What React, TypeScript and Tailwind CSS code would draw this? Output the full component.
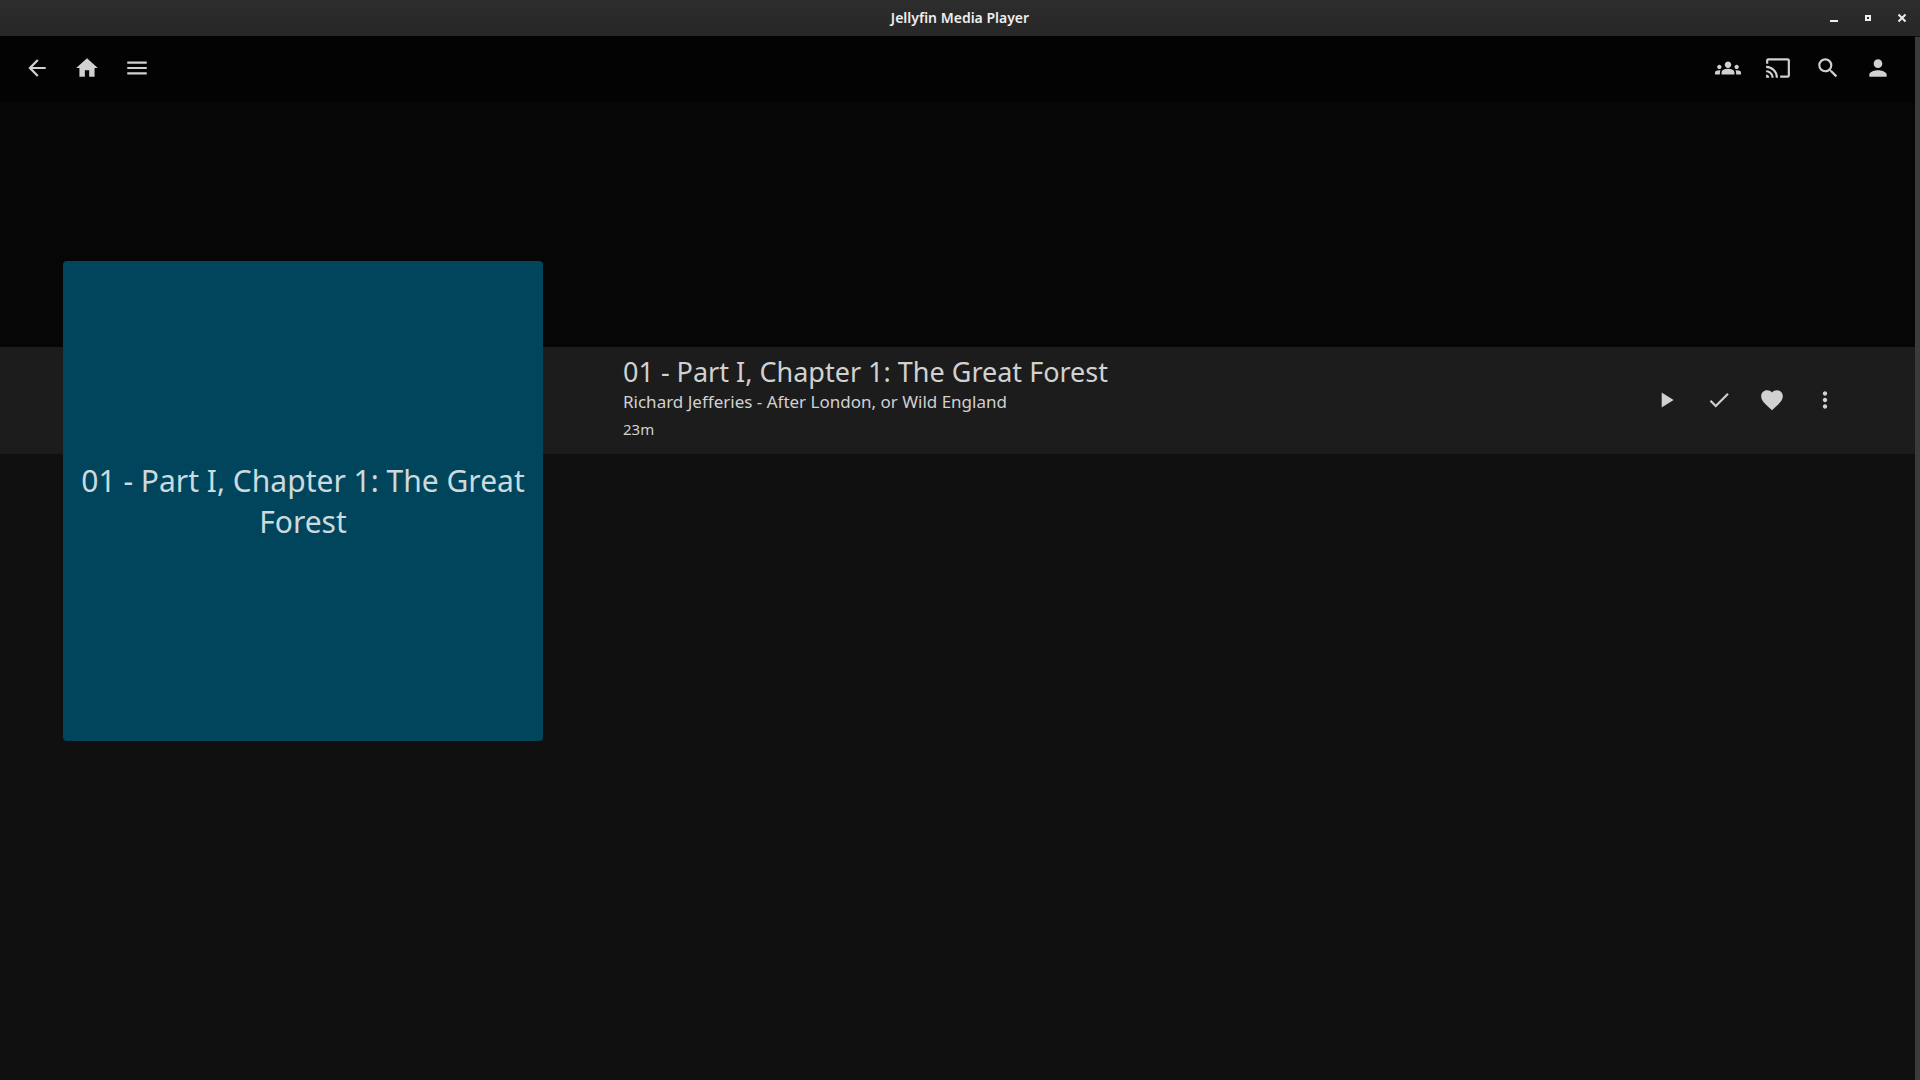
import type { ReactNode } from "react";
import type { IconType } from "react-icons";
import {
  MdArrowBack,
  MdCast,
  MdCheck,
  MdFavorite,
  MdGroups,
  MdHome,
  MdMenu,
  MdMoreVert,
  MdPerson,
  MdPlayArrow,
  MdSearch,
} from "react-icons/md";

type Action = { label: string; icon: IconType };

const navActions: Action[] = [
  { label: "Back", icon: MdArrowBack },
  { label: "Home", icon: MdHome },
  { label: "Menu", icon: MdMenu },
];

const userActions: Action[] = [
  { label: "SyncPlay", icon: MdGroups },
  { label: "Cast to device", icon: MdCast },
  { label: "Search", icon: MdSearch },
  { label: "User", icon: MdPerson },
];

const itemActions: Action[] = [
  { label: "Play", icon: MdPlayArrow },
  { label: "Mark played", icon: MdCheck },
  { label: "Favorite", icon: MdFavorite },
  { label: "More", icon: MdMoreVert },
];

function WindowButton({ label, children }: { label: string; children: ReactNode }) {
  return (
    <button type="button" aria-label={label} className="flex h-9 w-[34px] items-center justify-center">
      <svg width="10" height="10" viewBox="0 0 10 10" fill="none" stroke="#eeeeec" strokeWidth="2" aria-hidden="true">
        {children}
      </svg>
    </button>
  );
}

function TitleBar() {
  return (
    <div className="grid h-9 grid-cols-[1fr_auto_1fr] items-center bg-linear-to-b from-[#2d2d2d] to-[#272727]">
      <span />
      <h1 className="text-[14px] leading-5 font-semibold text-[#eeeeec]">Jellyfin Media Player</h1>
      <div className="flex justify-end pr-px">
        <WindowButton label="Minimize">
          <path d="M1 8h8" />
        </WindowButton>
        <WindowButton label="Maximize">
          <path d="M3 3h4v4H3z" />
        </WindowButton>
        <WindowButton label="Close">
          <path d="M1.5 1.5l7 7M8.5 1.5l-7 7" />
        </WindowButton>
      </div>
    </div>
  );
}

function IconGroup({ actions, buttonClass }: { actions: Action[]; buttonClass: string }) {
  return (
    <div className="flex">
      {actions.map(({ label, icon: Icon }) => (
        <button key={label} type="button" aria-label={label} className={`flex items-center justify-center ${buttonClass}`}>
          <Icon size={26} />
        </button>
      ))}
    </div>
  );
}

export default function App() {
  return (
    <div className="flex min-h-screen flex-col bg-[#101010] font-['Noto_Sans',sans-serif] text-[#d1d1d1]">
      <TitleBar />
      <div className="flex flex-1">
        <div className="flex-1">
          <header className="flex h-[66px] items-center justify-between bg-[#030303] px-3 pb-0.5">
            <IconGroup actions={navActions} buttonClass="h-[50px] w-[50px]" />
            <IconGroup actions={userActions} buttonClass="h-[50px] w-[50px]" />
          </header>
          <div className="h-[245px] bg-[#060606]" />
          <main className="relative flex items-center justify-between bg-[#1c1c1c] pr-16 pb-0.5 pl-[623px]">
            <div className="absolute top-[-86px] left-[63px] flex size-[480px] items-center justify-center rounded-[4px] bg-[#00455c] px-4 text-center text-[30px] leading-[41px] text-[#ccdade]">
              01 - Part I, Chapter 1: The Great Forest
            </div>
            <div className="pt-2 pb-2.5">
              <h2 className="text-[27px] leading-[33px]">01 - Part I, Chapter 1: The Great Forest</h2>
              <p className="text-[17px] leading-7">Richard Jefferies - After London, or Wild England</p>
              <p className="text-[15px] leading-[26px]">23m</p>
            </div>
            <IconGroup actions={itemActions} buttonClass="h-[53px] w-[53px]" />
          </main>
        </div>
        <div className="mt-px w-[5px] bg-[#3b3b3b]" />
      </div>
    </div>
  );
}
